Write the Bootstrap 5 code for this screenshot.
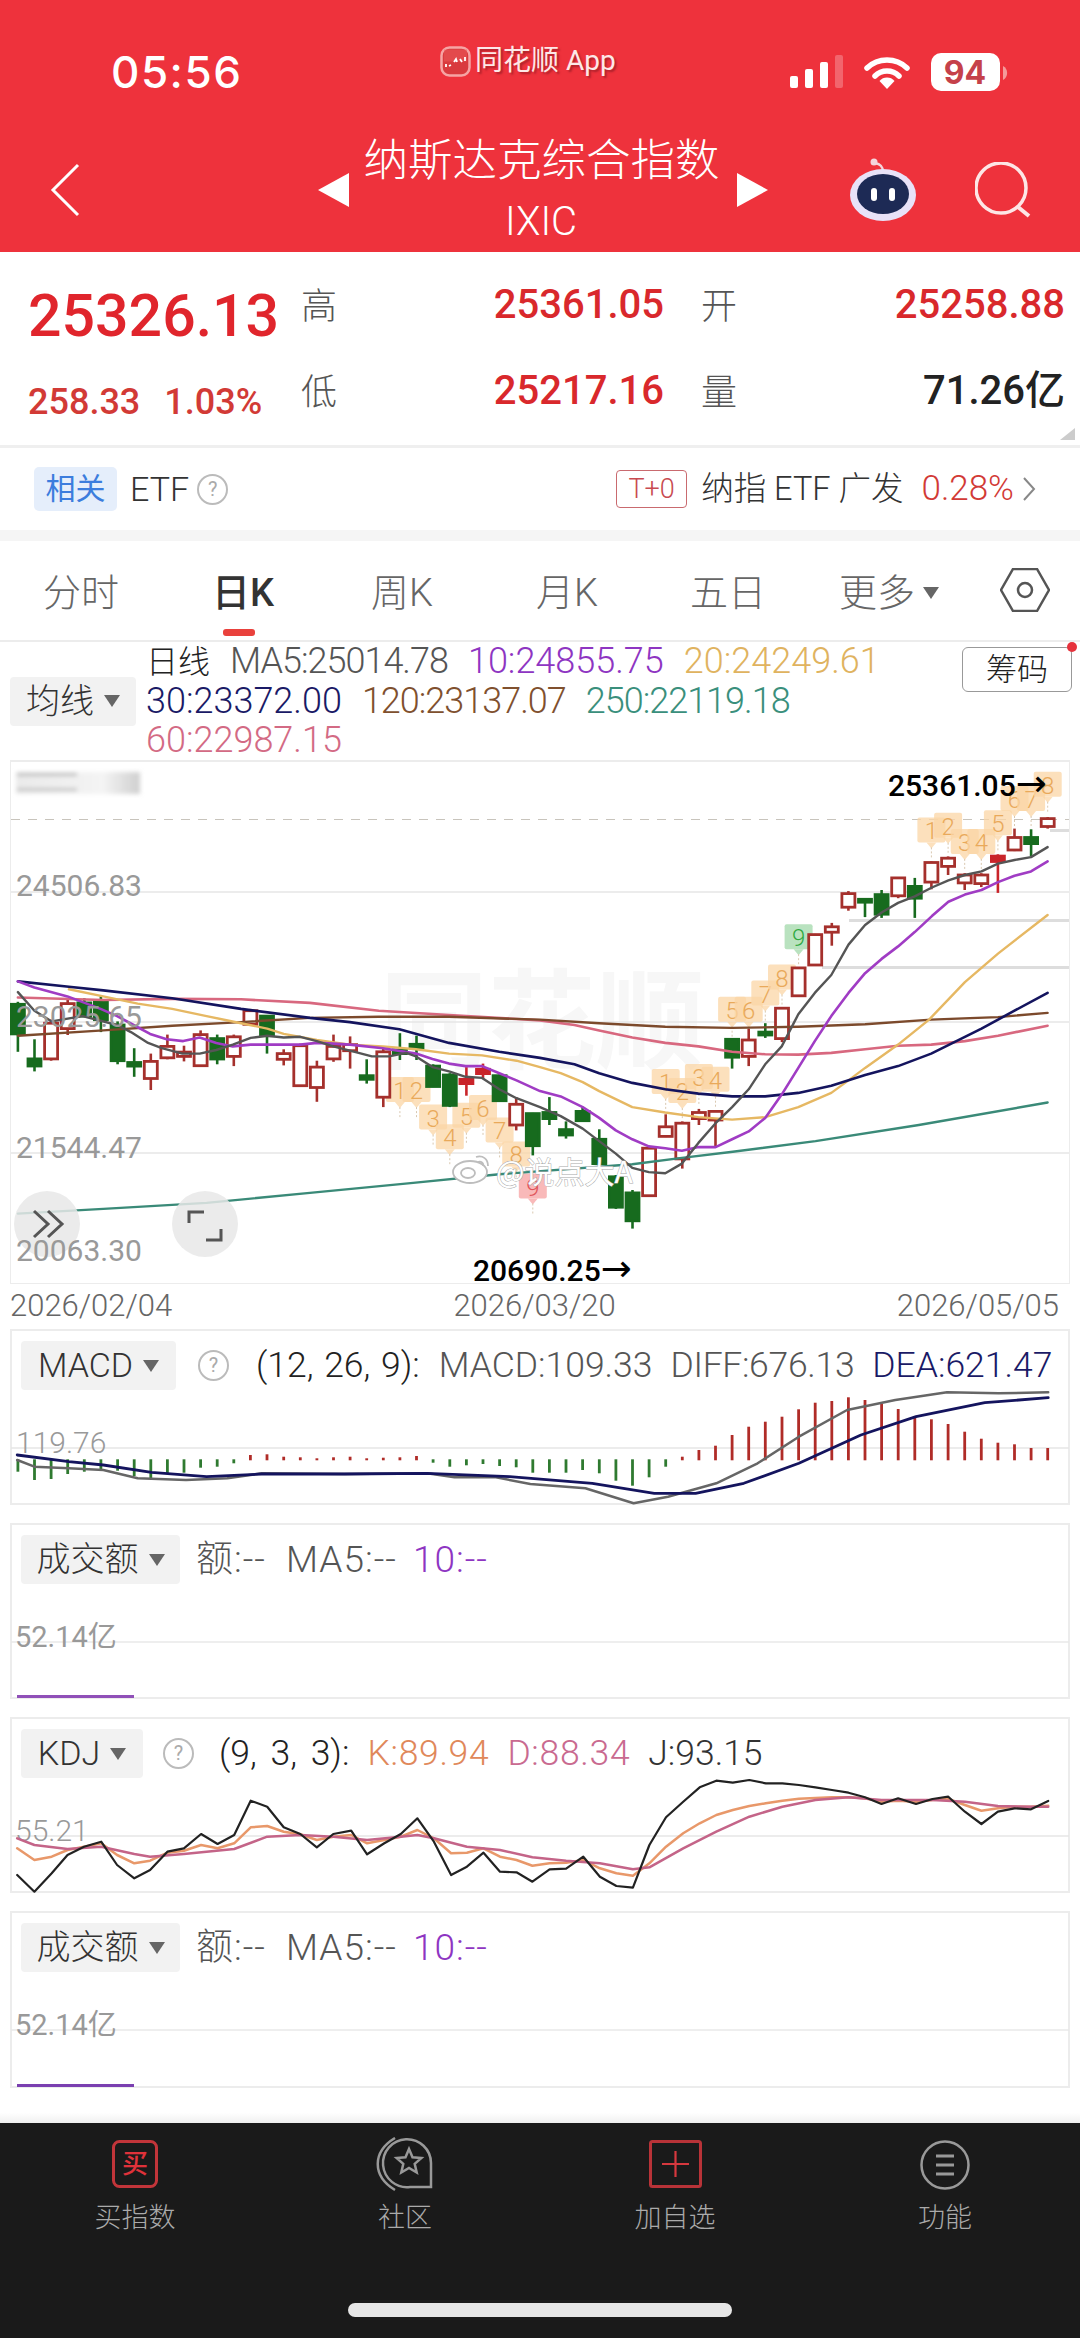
<!doctype html>
<html lang="zh">
<head>
<meta charset="utf-8">
<title>纳斯达克综合指数</title>
<link href="https://cdn.jsdelivr.net/npm/bootstrap@5.3.0/dist/css/bootstrap.min.css" rel="stylesheet">
<style>
html,body{margin:0;background:#fff}
body{width:1080px;height:2338px;overflow:hidden;font-family:Roboto,"Noto Sans CJK SC",sans-serif;color:#333}
.shell{width:1080px;height:2338px}
.top{background:#ee323c;color:#fff;height:252px}
.stat{display:grid;grid-template-columns:328px 350px 1fr;padding:50px 0 0 112px;height:94px;align-items:center}
.clock{font-family:Inter,sans-serif;font-weight:500;font-size:44px;line-height:44px;letter-spacing:1.5px;margin-left:-1px}
.app{font-size:28px;line-height:32px;margin-top:-22px;font-weight:400;color:#fde8e8;text-shadow:2px 2px 2px rgba(120,20,30,.55)}
.titlebar{margin-top:42px;padding-left:50px;height:107px}
.ttl{width:388px;text-align:center;font-weight:300}
.ttl1{font-size:44.500px;line-height:50px;letter-spacing:0;margin-left:-3px}
.ttl2{font-size:40px;line-height:44px;margin-top:14px;margin-left:-4px}
.quote{height:196px;padding:10px 0 0 28px;display:grid;grid-template-columns:272px 44px 320px 36px 44px 321px;grid-template-rows:86px 86px;align-items:center;border-bottom:3px solid #efefef}
.bigp{font-size:59px;font-weight:500;color:#e0252c;margin-top:21px;line-height:60px;white-space:nowrap}
.subp{font-size:36px;font-weight:500;color:#d23a36;margin-top:21px;line-height:40px;white-space:nowrap}
.qk{font-size:36px;color:#555;font-weight:300;line-height:40px;padding-top:3px;padding-left:1px}
.qv{font-size:40px;font-weight:500;color:#d9282c;text-align:right;line-height:44px}
.qd{color:#222}
.corner{right:5px;top:176px;border-left:15px solid transparent;border-bottom:12px solid #ccc}
.etf{height:82px;padding:0 44px 0 34px;font-size:34px;color:#333;font-weight:300}
.tag{background:#e5eefb;color:#3c7ddd;font-size:30px;line-height:44px;width:83px;text-align:center;border-radius:5px;font-weight:400;margin-right:13px}
.tq{width:31px;height:31px;border:2px solid #bbb;border-radius:50%;color:#aaa;font-size:20px;line-height:27px;text-align:center;font-weight:400;flex:none}
.t0{width:71px;height:38px;border:1px solid #c96a6f;border-radius:4px;color:#c84a50;font-size:27px;line-height:36px;text-align:center}
.fund{font-size:32.500px;margin-left:14px}
.fundp{font-size:35px;color:#d23a36;margin-left:18px}
.strip{height:11px;background:#f5f5f5}
.tabs{height:101px;border-bottom:2px solid #ececec;padding-left:43px;position:relative}
.tabs .nav-link{padding:0;color:#666;font-size:38px;line-height:44px;font-weight:300;position:relative}
.tabs .nav-link.active{color:#333;font-weight:500}
.tabs .nav-link.active::after{content:"";position:absolute;left:11px;width:32px;height:7px;top:58px;background:#e9413c;border-radius:3px}
.tabs-i{height:99px;padding-top:30px}
.tri{display:inline-block;width:0;height:0;border-left:8px solid transparent;border-right:8px solid transparent;border-top:12px solid #666;vertical-align:middle}
.gear{margin-top:-3px}
.legend{height:118px;position:relative}
.sel{background:#f2f2f2;color:#333;border:0;border-radius:4px;padding:0;font-size:34px;font-weight:300;line-height:49px;height:49px;display:flex;align-items:center;justify-content:center;gap:10px}
.sel:hover,.sel:active{background:#f2f2f2;color:#333}
.lines{font-size:36px;line-height:39px;width:806px;white-space:nowrap;font-weight:300}
.lines span{margin-right:20px}
.lines .tight{letter-spacing:-1px}
.chou{width:110px;height:45px;background:#fff;border:1px solid #999;border-radius:6px;color:#222;font-size:31px;line-height:42px;padding:0;font-weight:300;margin-top:5px}
.chou:hover{background:#fff;color:#222;border-color:#999}
.dotred{width:10px;height:10px;background:#e6323c;border-radius:50%;top:0;right:-5px}
.frame{margin:0 10px;background:transparent;border:0;border-radius:0;box-shadow:inset 0 0 0 2px #ececec}
.frame svg{display:block;overflow:visible}
.dates{height:45px;padding:4px 21px 0 10px;font-size:31px;line-height:36px;color:#666;font-weight:300}
.phead{height:61px;padding:12px 0 0 11px;font-size:35.500px;line-height:49px;white-space:nowrap;font-weight:300;word-spacing:2px}
.phead .sel{flex:none}
.vol{font-size:37px;letter-spacing:1px}
.vol .sel{letter-spacing:0}
.param{word-spacing:5px}
.mg{margin-bottom:18px}
.pch{margin-top:-1px}
.c-ma5{color:#555}.c-10{color:#8e35c2}.c-20{color:#e0b35f}.c-30{color:#1a1a66}.c-120{color:#80502e}.c-250{color:#3a8f7c}.c-60{color:#d36a84}
.foot-gap{height:35px;background:linear-gradient(#fff 70%,#f0f0f0)}
.foot{background:#1a1a1a;height:216px;color:#aaa;padding-top:17px}
.fl{font-size:27px;line-height:30px;margin-top:13px;font-weight:300}
.fi{height:50px;display:flex;justify-content:center}
.home{width:384px;height:14px;background:#e6e6e6;border-radius:7px;margin:70px auto 0}
.mk{font-family:Roboto,sans-serif;font-size:24px;font-weight:300;text-anchor:middle}
.ax{font-family:Roboto,sans-serif;font-size:30px;fill:#999;font-weight:400}
.ax2{font-family:Roboto,"Noto Sans CJK SC",sans-serif;font-size:29px;fill:#999;font-weight:400}
.bk{font-family:Roboto,"DejaVu Sans",sans-serif;font-size:30px;fill:#000;font-weight:500}
.wm{font-family:"Noto Sans CJK SC",sans-serif;font-size:108px;font-weight:700;fill:#f7f7f7}
.wb{font-family:"Noto Sans CJK SC",Roboto,sans-serif;font-size:30px;font-weight:400;fill:#fff;stroke:#aaa;stroke-width:1;paint-order:stroke}
</style>
</head>
<body>
<div class="shell">
  <header class="top">
    <div class="stat">
      <div class="clock">05:56</div>
      <div class="app d-flex align-items-center gap-1">
        <svg width="31" height="31" viewBox="0 0 31 31"><rect x="1.5" y="1.5" width="28" height="28" rx="8" fill="#d93a3e" stroke="#f6a4a4" stroke-width="2.5"/><rect x="4" y="3.500" width="23" height="12" fill="#ee5a5a" opacity=".5"/><path d="M6 21v-3M9 20l2-1M14 16l2-3 1 3M20 13l2 3M25 11v4" stroke="#fff" stroke-width="1.800" fill="none"/></svg>
        <span>同花顺 App</span>
      </div>
      <div>
        <svg width="220" height="44" viewBox="790 50 220 44" class="d-block">
          <rect x="790" y="76" width="8" height="12" rx="2" fill="#fff"/><rect x="805" y="69" width="8" height="19" rx="2" fill="#fff"/><rect x="820" y="62" width="8" height="26" rx="2" fill="#fff"/><rect x="835" y="55" width="8" height="33" rx="2" fill="#fff" fill-opacity=".25"/>
          <g fill="none" stroke="#fff" stroke-width="5.500" stroke-linecap="round"><path d="M867 68a29 29 0 0 1 40 0"/><path d="M875 76a17 17 0 0 1 24 0"/></g>
          <path d="M887 89l-7.500-8a10 10 0 0 1 15 0z" fill="#fff"/>
          <rect x="931" y="53" width="69" height="38" rx="10" fill="#fff"/>
          <text x="965" y="84" text-anchor="middle" font-family="Inter,sans-serif" font-size="32" font-weight="700" fill="#c5414a">94</text>
          <path d="M1003 66a8 8 0 0 1 0 14z" fill="#f49a9a"/>
        </svg>
      </div>
    </div>
    <div class="titlebar d-flex align-items-center">
      <svg width="30" height="54" viewBox="0 0 30 54"><path d="M28 2L3 27l25 25" fill="none" stroke="#fff" stroke-width="3"/></svg>
      <svg style="margin-left:238px" width="31" height="34" viewBox="0 0 31 34"><path d="M31 0v34L0 17z" fill="#fff"/></svg>
      <div class="ttl">
        <div class="ttl1">纳斯达克综合指数</div>
        <div class="ttl2">IXIC</div>
      </div>
      <svg width="31" height="34" viewBox="0 0 31 34"><path d="M0 0v34l31-17z" fill="#fff"/></svg>
      <svg style="margin-left:82px" width="66" height="64" viewBox="850 156 66 64">
        <path d="M883 170c0-6-3-8-8-9" fill="none" stroke="#f4d4dc" stroke-width="2.500"/><circle cx="874" cy="160" r="3.500" fill="#f4d4dc"/>
        <ellipse cx="883" cy="193" rx="33" ry="26" fill="#e8e2f8"/>
        <ellipse cx="883" cy="192" rx="26" ry="20" fill="#1d2a55"/>
        <rect x="871" y="186" width="6" height="13" rx="3" fill="#fff"/><rect x="889" y="186" width="6" height="13" rx="3" fill="#fff"/>
      </svg>
      <svg style="margin-left:59px" width="56" height="56" viewBox="974 162 56 56"><circle cx="1000" cy="188" r="25" fill="none" stroke="#fde6e6" stroke-width="3.500"/><path d="M1017 207l11 9" stroke="#fde6e6" stroke-width="4" fill="none"/></svg>
    </div>
  </header>

  <section class="quote position-relative">
    <div class="bigp">25326.13</div>
    <div class="qk">高</div>
    <div class="qv">25361.05</div>
    <div></div>
    <div class="qk">开</div>
    <div class="qv">25258.88</div>
    <div class="subp d-flex gap-4"><span>258.33</span><span>1.03%</span></div>
    <div class="qk">低</div>
    <div class="qv">25217.16</div>
    <div></div>
    <div class="qk">量</div>
    <div class="qv qd">71.26亿</div>
    <div class="corner position-absolute"></div>
  </section>

  <section class="etf d-flex align-items-center">
    <div class="tag">相关</div>
    <span>ETF</span>
    <div class="tq ms-2">?</div>
    <div class="ms-auto t0">T+0</div>
    <span class="fund">纳指 ETF 广发</span>
    <span class="fundp">0.28%</span>
    <svg class="ms-2" width="14" height="26" viewBox="0 0 14 26"><path d="M2 2l10 11L2 24" fill="none" stroke="#888" stroke-width="2"/></svg>
  </section>

  <div class="strip"></div>

  <nav class="tabs">
    <div class="nav tabs-i align-items-start">
      <a class="nav-link" style="width:169px">分时</a>
      <a class="nav-link active" style="width:159px">日K</a>
      <a class="nav-link" style="width:165px">周K</a>
      <a class="nav-link" style="width:154px">月K</a>
      <a class="nav-link" style="width:149px">五日</a>
      <a class="nav-link d-flex align-items-center gap-1" style="width:161px">更多<span class="tri ms-1"></span></a>
      <svg class="gear" width="50" height="44" viewBox="999 568 50 44"><path d="M1000 590l12-21h24l12 21-12 21h-24z" fill="none" stroke="#555" stroke-width="2.500"/><circle cx="1024" cy="590" r="7" fill="none" stroke="#555" stroke-width="2.500"/></svg>
    </div>
  </nav>

  <section class="legend d-flex">
    <button class="btn sel align-self-center" style="width:126px;margin-left:10px">均线 <span class="tri"></span></button>
    <div class="lines" style="margin-left:10px">
      <div><span style="color:#222;margin-right:20px;font-size:32px">日线</span><span class="c-ma5 tight">MA5:25014.78</span><span class="c-10">10:24855.75</span><span class="c-20">20:24249.61</span></div>
      <div><span class="c-30">30:23372.00</span><span class="c-120 tight">120:23137.07</span><span class="c-250 tight">250:22119.18</span></div>
      <div><span class="c-60">60:22987.15</span></div>
    </div>
    <div class="position-relative ms-auto me-2">
      <button class="btn chou">筹码</button>
      <span class="dotred position-absolute"></span>
    </div>
  </section>

  <div class="card frame"><svg id="kline" width="1060" height="524" viewBox="10 760 1060 524"></svg></div>

  <div class="dates d-flex justify-content-between">
    <span>2026/02/04</span><span>2026/03/20</span><span>2026/05/05</span>
  </div>

  <div class="card frame mg">
    <div class="phead d-flex align-items-center">
      <button class="btn sel" style="width:155px">MACD <span class="tri"></span></button>
      <div class="tq" style="margin-left:22px">?</div>
      <span style="margin-left:27px;color:#222">(12, 26, 9):</span>
      <span class="c-ma5" style="margin-left:19px">MACD:109.33</span>
      <span class="c-ma5" style="margin-left:18px;letter-spacing:-.3px">DIFF:676.13</span>
      <span class="c-30" style="margin-left:18px">DEA:621.47</span>
    </div>
    <svg id="macd" class="pch" width="1060" height="116" viewBox="10 1389 1060 116"></svg>
  </div>

  <div class="card frame mg">
    <div class="phead vol d-flex align-items-center">
      <button class="btn sel" style="width:159px">成交额 <span class="tri"></span></button>
      <span class="c-ma5" style="margin-left:16px">额:--</span>
      <span class="c-ma5" style="margin-left:20px">MA5:--</span>
      <span class="c-10" style="margin-left:16px">10:--</span>
    </div>
    <svg class="pch" width="1060" height="116" viewBox="10 1583 1060 116">
      <line x1="11" x2="1069" y1="1642" y2="1642" stroke="#e9e9e9" stroke-width="1.500"/>
      <text class="ax2" x="15" y="1647">52.14亿</text>
      <rect x="17" y="1695" width="117" height="3" fill="#9050b8"/>
    </svg>
  </div>

  <div class="card frame mg">
    <div class="phead d-flex align-items-center">
      <button class="btn sel" style="width:122px">KDJ <span class="tri"></span></button>
      <div class="tq" style="margin-left:20px">?</div>
      <span class="param" style="margin-left:25px;color:#222">(9, 3, 3):</span>
      <span style="margin-left:18px;color:#e0885a;letter-spacing:.7px">K:89.94</span>
      <span style="margin-left:18px;color:#c96a90;letter-spacing:.7px">D:88.34</span>
      <span style="margin-left:18px;color:#333">J:93.15</span>
    </div>
    <svg id="kdj" class="pch" width="1060" height="116" viewBox="10 1777 1060 116"></svg>
  </div>

  <div class="card frame" style="height:177px">
    <div class="phead vol d-flex align-items-center">
      <button class="btn sel" style="width:159px">成交额 <span class="tri"></span></button>
      <span class="c-ma5" style="margin-left:16px">额:--</span>
      <span class="c-ma5" style="margin-left:20px">MA5:--</span>
      <span class="c-10" style="margin-left:16px">10:--</span>
    </div>
    <svg class="pch" width="1060" height="117" viewBox="10 1970 1060 117">
      <line x1="11" x2="1069" y1="2029" y2="2029" stroke="#e9e9e9" stroke-width="1.500"/>
      <text class="ax2" x="15" y="2034">52.14亿</text>
      <rect x="17" y="2083" width="117" height="3" fill="#7a3fb0"/>
    </svg>
  </div>

  <div class="foot-gap"></div>
  <footer class="foot">
    <div class="row g-0 text-center">
      <div class="col-3">
        <div class="fi">
          <svg width="46" height="48" viewBox="0 0 46 48"><rect x="1.500" y="1.500" width="43" height="45" rx="6" fill="none" stroke="#c2353a" stroke-width="3"/><text x="23" y="33" text-anchor="middle" font-family="Noto Sans CJK SC,sans-serif" font-size="26" font-weight="500" fill="#e0323a">买</text></svg>
        </div>
        <div class="fl">买指数</div>
      </div>
      <div class="col-3">
        <div class="fi">
          <svg width="58" height="56" viewBox="376 2136 58 56" style="margin-top:-3px"><g fill="none" stroke="#999" stroke-width="2.500"><path d="M395 2137c-23 14-23 38 0 52"/><path d="M431 2186H410a24 24 0 1 1 21-24z"/><path transform="translate(409 2161)" d="M0-13l3.500 8.200 8.900.800-6.700 5.900 2 8.600L0 6l-7.700 4.500 2-8.600-6.700-5.900 8.900-.800z"/></g></svg>
        </div>
        <div class="fl">社区</div>
      </div>
      <div class="col-3">
        <div class="fi">
          <svg width="53" height="48" viewBox="0 0 53 48"><rect x="1.500" y="1.500" width="50" height="45" rx="2" fill="none" stroke="#b83338" stroke-width="3"/><path d="M26.500 11v26M13 24h27" stroke="#d6383e" stroke-width="2.200"/></svg>
        </div>
        <div class="fl">加自选</div>
      </div>
      <div class="col-3">
        <div class="fi">
          <svg width="50" height="50" viewBox="0 0 50 50"><circle cx="25" cy="25" r="23.500" fill="none" stroke="#999" stroke-width="2.500"/><path d="M16 16h18M16 25h18M16 34h18" stroke="#999" stroke-width="2.800"/></svg>
        </div>
        <div class="fl">功能</div>
      </div>
    </div>
    <div class="home"></div>
  </footer>
</div>

<script>
const zx=i=>17.9+16.61*i, zy=z=>750+z/2.8;
const A=x=>x/2.904, B=x=>540+x/2.904;
function pl(pts,fx,fy,col,w,op){return `<polyline fill="none" stroke="${col}" stroke-width="${w}" stroke-linejoin="round" stroke-linecap="round"${op?` opacity="${op}"`:''} points="${pts.map(p=>fx(p[0]).toFixed(1)+','+fy(p[1]).toFixed(1)).join(' ')}"/>`}
/* k-line data in zoom units: type, top, bottom, high, low */
const K=[['g',712,795,705,845],['g',865,885,810,900],['r',765,865,755,870],['r',710,780,695,798],['g',708,745,695,748],['g',705,755,690,790],['g',770,870,760,880],['g',875,885,835,915],['r',872,920,850,952],['r',830,862,797,866],['r',846,858,828,872],['r',797,884,785,886],['g',808,865,797,880],['r',803,858,797,885],['r',730,768,725,770],['g',745,800,742,850],['r',850,866,838,883],['r',828,940,822,942],['r',888,945,870,985],['r',830,865,797,873],['r',825,842,802,892],['g',912,922,866,934],['r',845,972,835,1000],['g',840,850,793,868],['g',824,834,800,868],['g',885,942,880,944],['g',910,995,905,1000],['f',922,934,888,968],['f',894,906,878,920],['g',912,982,908,985],['r',992,1050,972,1065],['g',1018,1108,1016,1135],
['g',1015,1032,972,1050],['g',1063,1078,1040,1088],['g',1012,1038,1000,1040],['g',1090,1158,1062,1160],['g',1195,1280,1190,1285],['g',1240,1318,1232,1340],['r',1115,1248,1110,1250],['r',1055,1082,1020,1084],['r',1045,1145,1040,1172],['r',1015,1032,1005,1050],['r',1012,1036,1008,1110],['g',810,860,808,892],['r',812,858,780,885],['g',790,798,765,806],['r',723,808,720,818],['r',610,688,608,690],['r',517,602,515,604],['r',495,510,484,548],['r',402,440,395,450],['g',418,426,415,468],['g',405,460,392,470],['r',358,408,356,415],['g',382,415,358,470],['r',315,370,312,390],['r',303,326,298,350],['r',350,372,345,392],['r',350,374,345,384],['f',297,312,292,400],['r',245,280,220,283],['g',245,262,222,298],['r',192,214,188,220]];
const seg=(a,b)=>a.map(p=>[A(p[0]),p[1]]).concat(b.map(p=>[B(p[0]),p[1]]));
const I=x=>x;
const L={
 ma250:seg([[52,1298],[300,1285],[600,1268],[900,1240],[1200,1212],[1450,1188]],[[268,1160],[412,1142],[560,1125],[800,1095],[1100,1050],[1474,987]]),
 ma120:seg([[52,800],[300,785],[500,772],[700,762],[900,750],[1100,747],[1304,747]],[[0,755],[172,765],[364,775],[558,778],[750,775],[944,768],[1136,755],[1330,748],[1474,736]]),
 ma60:seg([[52,693],[300,700],[500,697],[700,698],[900,708],[1100,730],[1304,742]],[[0,757],[100,770],[172,785],[268,805],[364,820],[460,830],[558,845],[654,852],[750,853],[846,848],[944,838],[1040,828],[1136,825],[1234,815],[1330,800],[1474,772]]),
 ma20:seg([[200,670],[300,690],[400,710],[500,725],[600,745],[700,765],[776,780],[824,795],[920,812],[1016,825],[1112,830],[1208,838],[1304,850],[1400,855],[1500,870]],[[0,888],[60,905],[124,930],[172,955],[268,1000],[364,1015],[460,1028],[558,1035],[654,1028],[750,1000],[846,960],[896,925],[944,890],[1040,825],[1130,755],[1234,650],[1330,570],[1474,462]]),
 ma30:seg([[52,648],[200,663],[300,673],[500,695],[700,725],[900,750],[1016,762],[1160,782],[1304,820],[1450,845]],[[0,862],[100,880],[172,905],[268,932],[364,950],[460,962],[558,970],[654,970],[750,960],[846,940],[944,910],[1040,885],[1136,850],[1282,780],[1378,730],[1474,680]]),
 ma10:seg([[52,648],[100,665],[196,690],[292,725],[340,745],[388,770],[436,795],[484,810],[532,815],[580,805],[628,820],[676,830],[728,825],[776,825],[872,825],[920,820],[968,822],[1016,825],[1112,835],[1208,850],[1256,865],[1304,878],[1352,885],[1400,885],[1450,905],[1500,925]],[[0,955],[60,970],[124,1000],[172,1030],[220,1065],[268,1090],[316,1110],[364,1115],[412,1122],[460,1112],[510,1112],[558,1090],[606,1068],[654,1030],[702,965],[750,890],[798,815],[846,745],[896,680],[944,625],[992,585],[1040,550],[1088,510],[1138,465],[1186,425],[1234,405],[1282,392],[1330,370],[1378,352],[1426,340],[1474,312]]),
 ma5:seg([[52,678],[100,730],[150,760],[240,745],[340,770],[380,790],[430,820],[470,835],[530,850],[580,850],[628,840],[676,825],[728,806],[776,800],[824,805],[872,803],[920,815],[968,830],[1030,845],[1080,858],[1130,858],[1180,848],[1208,858],[1256,888],[1304,900],[1352,915],[1400,918],[1450,950],[1500,975]],[[0,1000],[60,1025],[124,1060],[172,1095],[220,1130],[268,1170],[316,1182],[364,1185],[412,1158],[460,1100],[510,1045],[558,1000],[606,950],[654,880],[702,830],[750,740],[798,680],[846,630],[896,545],[944,490],[992,455],[1040,428],[1088,410],[1138,385],[1186,365],[1234,350],[1282,340],[1330,318],[1378,308],[1426,300],[1474,272]])
};
/* TD markers: label, candle index, text y in zoom units, tone */
const M=[[1,23,955],[2,24,955],[3,25,1032],[4,26,1087],[5,27,1027],[6,28,1005],[7,29,1068],[8,30,1135],[9,31,1225,'p'],[1,39,932],[2,40,958],[3,41,918],[4,42,926],[5,43,730],[6,44,730],[7,45,685],[8,46,640],[9,47,527,'v'],[1,55,228],[2,56,215],[3,57,260],[4,58,260],[5,59,208],[6,60,140],[7,61,140],[8,62,100]];
let s='';
s+=`<defs><filter id="bl" x="-20%" y="-40%" width="140%" height="180%"><feGaussianBlur stdDeviation="2"/></filter><linearGradient id="gr"><stop offset="0" stop-color="#eaeaea"/><stop offset=".7" stop-color="#f4f4f4"/><stop offset="1" stop-color="#cfcfcf"/></linearGradient></defs>`;
s+=`<rect x="11" y="762" width="1058" height="521" fill="#fff"/>`;
s+=`<g filter="url(#bl)"><rect x="16" y="772" width="124" height="22" fill="url(#gr)"/><rect x="17" y="773" width="60" height="3" fill="#bbb"/><rect x="17" y="788" width="60" height="3" fill="#c4c4c4"/></g>`;
s+=`<text class="wm" x="380" y="1060">同花顺</text>`;
/* grid */
[892,1022,1153].forEach(y=>s+=`<line x1="11" x2="1069" y1="${y}" y2="${y}" stroke="#e6e6e6" stroke-width="1.500"/>`);
s+=`<line x1="11" x2="1069" y1="819.500" y2="819.500" stroke="#c8c4bc" stroke-width="1.200" stroke-dasharray="9 8"/>`;
s+=`<rect x="849" y="919" width="220" height="3" fill="#ddd"/><rect x="822" y="966" width="247" height="3" fill="#ddd"/><rect x="1050" y="829" width="19" height="3" fill="#ddd"/>`;
/* markers */
M.forEach(m=>{const x=zx(m[1]),y=zy(m[2]);const bg=m[3]=='p'?'#f9b9b9':m[3]=='v'?'#b9e2bf':'#fbd6a6';const fg=m[3]=='p'?'#e0555a':m[3]=='v'?'#2fa93f':'#e9a95a';
 const by=y-14;
 s+=`<g opacity="${m[3]?1:.75}"><rect x="${(x-14).toFixed(1)}" y="${by.toFixed(1)}" width="28" height="25" rx="2" fill="${bg}"/><path d="M${(x-5).toFixed(1)} ${(by+25).toFixed(1)}h10l-5 6z" fill="${bg}"/></g><line x1="${x.toFixed(1)}" x2="${x.toFixed(1)}" y1="${(by+30).toFixed(1)}" y2="${(by+42).toFixed(1)}" stroke="#d9c8b0" stroke-width="1" stroke-dasharray="2 2"/><text class="mk" x="${x.toFixed(1)}" y="${(y+8).toFixed(1)}" fill="${fg}">${m[0]}</text>`;});
/* candles */
K.forEach((k,i)=>{const x=zx(i).toFixed(1);const t=zy(k[1]),b=zy(k[2]),h=zy(k[3]),l=zy(k[4]);
 const c=k[0]=='g'?'#176b1e':k[0]=='f'?'#c9242a':'#a5302c';
 s+=`<line x1="${x}" x2="${x}" y1="${h.toFixed(1)}" y2="${l.toFixed(1)}" stroke="${c}" stroke-width="2.600"/>`;
 s+=`<rect x="${(+x-6.5).toFixed(1)}" y="${t.toFixed(1)}" width="13" height="${Math.max(2,b-t).toFixed(1)}" fill="${k[0]=='r'?'#fff':c}" stroke="${c}" stroke-width="2.800"/>`;});
/* ma lines */
const P=(c,w,op)=>p=>pl(p,I,zy,c,w,op);
s+=P('#3a8a78',2.400)(L.ma250)+P('#d8687f',2.600)(L.ma60)+P('#7c4a2c',2.400)(L.ma120)+P('#e6b863',2.400)(L.ma20)+P('#14145e',2.600)(L.ma30)+P('#a03cc4',2.600)(L.ma10)+P('#555',2.400)(L.ma5);
/* weibo mark */
s+=`<g fill="none" stroke="#bdbdbd" stroke-width="1.800"><ellipse cx="470" cy="1172" rx="17" ry="11" fill="#fff"/><ellipse cx="468" cy="1173" rx="7" ry="5"/><path d="M476 1157c7-2 12 2 12 9M478 1162c3-1 6 1 5 4"/></g>`;
s+=`<text class="wb" x="496" y="1183">@说点大A</text>`;
/* float buttons */
s+=`<circle cx="47" cy="1224" r="33" fill="#e8e8e8" fill-opacity=".85"/><path d="M34 1211l14 13-14 13M48 1211l14 13-14 13" fill="none" stroke="#555" stroke-width="3"/>`;
s+=`<circle cx="205" cy="1224" r="33" fill="#e8e8e8" fill-opacity=".85"/><path d="M189 1223v-11h15M206 1240h15v-11" fill="none" stroke="#555" stroke-width="3"/>`;
/* labels */
s+=`<text class="ax" x="16" y="896">24506.83</text><text class="ax" x="16" y="1027">23025.65</text><text class="ax" x="16" y="1158">21544.47</text><text class="ax" x="16" y="1261">20063.30</text>`;
s+=`<text class="bk" x="888" y="796">25361.05<tspan font-size="37">→</tspan></text><text class="bk" x="473" y="1281">20690.25<tspan font-size="37">→</tspan></text>`;
document.getElementById('kline').innerHTML=s;

/* MACD */
const bars=[455,480,477,462,455,447,452,468,475,462,458,443,440,430,405,403,410,412,415,412,410,415,413,412,408,428,440,436,432,438,442,458,458,458,450,460,482,497,472,440,410,390,377,345,320,305,290,268,248,243,232,240,252,267,290,298,312,335,356,368,373,384,384];
const mx=x=>x/1.452, my=z=>1320+z/3;
let m=`<line x1="11" x2="1069" y1="1448" y2="1448" stroke="#e6e6e6" stroke-width="1.500"/><text class="ax" style="font-weight:300" x="16" y="1453">119.76</text>`;
bars.forEach((b,i)=>{const x=zx(i).toFixed(1);const red=b<421;const y0=my(red?b:418),y1=my(red?421:b);m+=`<line x1="${x}" x2="${x}" y1="${y0.toFixed(1)}" y2="${y1.toFixed(1)}" stroke="${red?'#b02c28':'#2f7a30'}" stroke-width="2.800"/>`});
m+=pl([[25,420],[50,440],[100,445],[150,450],[200,475],[270,480],[330,475],[380,460],[500,462],[620,460],[660,472],[720,472],[770,492],[850,505],[920,550],[970,530],[1040,490],[1100,430],[1160,350],[1230,270],[1300,240],[1375,217],[1450,220],[1522,217]],mx,my,'#666',2.500);
m+=pl([[25,405],[100,425],[150,435],[220,457],[300,470],[380,462],[500,462],[620,460],[740,470],[860,490],[950,520],[1010,520],[1080,490],[1160,430],[1250,345],[1330,290],[1430,248],[1522,233]],mx,my,'#14145e',2.800);
document.getElementById('macd').innerHTML=m;

/* KDJ */
const ky=z=>1700+z/3;
const J=[[25,525],[50,575],[75,520],[98,465],[122,440],[147,425],[170,495],[195,535],[218,510],[243,455],[267,445],[292,402],[316,432],[340,405],[364,302],[388,320],[412,382],[436,402],[460,442],[484,402],[510,392],[533,463],[558,430],[582,402],[606,355],[630,425],[655,525],[678,500],[702,458],[726,515],[750,517],[773,545],[798,508],[822,506],[847,470],[871,530],[895,558],[919,563],[943,435],[967,352],[992,305],[1016,262],[1040,242],[1064,248],[1088,240],[1112,250],[1136,250],[1160,255],[1184,262],[1208,270],[1232,278],[1256,292],[1280,312],[1304,295],[1330,312],[1354,297],[1377,290],[1401,335],[1425,372],[1449,335],[1473,325],[1497,328],[1522,303]];
const KK=[[25,445],[50,480],[75,470],[98,450],[122,440],[147,430],[170,465],[195,490],[218,482],[243,458],[267,452],[292,435],[316,445],[340,430],[364,382],[388,378],[412,395],[436,403],[460,420],[484,410],[510,405],[533,430],[558,420],[582,410],[606,390],[630,415],[655,460],[678,458],[702,445],[726,470],[750,480],[773,497],[798,490],[822,488],[847,480],[871,505],[895,520],[919,527],[943,490],[967,440],[992,400],[1016,370],[1040,345],[1064,330],[1088,318],[1112,310],[1136,302],[1160,296],[1184,294],[1208,292],[1232,292],[1256,295],[1280,305],[1304,302],[1330,305],[1354,300],[1377,297],[1401,315],[1425,332],[1449,325],[1473,320],[1497,320],[1522,317]];
const D=[[25,415],[50,435],[98,447],[147,440],[195,462],[218,470],[267,462],[340,447],[388,410],[436,405],[484,410],[533,420],[582,410],[606,405],[630,415],[678,440],[726,450],[773,472],[822,482],[871,490],[919,508],[943,502],[992,445],[1040,395],[1088,350],[1136,320],[1184,300],[1232,292],[1280,300],[1354,300],[1401,305],[1449,318],[1497,320],[1522,320]];
let kd=`<line x1="11" x2="1069" y1="1836" y2="1836" stroke="#e6e6e6" stroke-width="1.500"/><text class="ax" style="font-weight:300" x="15" y="1841">55.21</text>`;
kd+=pl(KK,mx,ky,'#e8986a',2.500)+pl(D,mx,ky,'#c46488',2.500)+pl(J,mx,ky,'#222',2.200);
document.getElementById('kdj').innerHTML=kd;
</script>
<script src="https://cdn.jsdelivr.net/npm/bootstrap@5.3.0/dist/js/bootstrap.bundle.min.js"></script>
</body>
</html>
